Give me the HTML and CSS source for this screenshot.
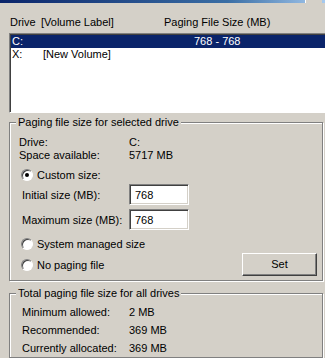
FILE: index.html
```html
<!DOCTYPE html>
<html lang="en">
<head>
  <meta charset="UTF-8" />
  <title>Virtual Memory</title>
  <link rel="stylesheet" href="styles.css">
</head>
<body>
  <div class="titlebar"><span class="tb-btn"></span></div>

  <div class="dialog">
    <div class="list-head">
      <span>Drive</span><span>[Volume Label]</span><span>Paging File Size (MB)</span>
    </div>
    <div class="listbox">
      <div class="row selected"><span>C:</span><span></span><span>768 - 768</span></div>
      <div class="row"><span>X:</span><span>[New Volume]</span><span></span></div>
    </div>

    <fieldset class="group group-drive">
      <legend>Paging file size for selected drive</legend>
      <div class="info"><span>Drive:</span><span>C:</span></div>
      <div class="info"><span>Space available:</span><span>5717 MB</span></div>

      <div class="radio custom"><span class="dot checked"></span>Custom size:</div>
      <div class="field first"><span>Initial size (MB):</span><span class="edit">768</span></div>
      <div class="field"><span>Maximum size (MB):</span><span class="edit">768</span></div>

      <div class="radio system"><span class="dot"></span>System managed size</div>
      <div class="last-row">
        <div class="radio"><span class="dot"></span>No paging file</div>
        <span class="button">Set</span>
      </div>
    </fieldset>

    <fieldset class="group group-total">
      <legend>Total paging file size for all drives</legend>
      <div class="total"><span>Minimum allowed:</span><span>2 MB</span></div>
      <div class="total"><span>Recommended:</span><span>369 MB</span></div>
      <div class="total"><span>Currently allocated:</span><span>369 MB</span></div>
    </fieldset>
  </div>

  <div class="bottom-strip"></div>
</body>
</html>
```

FILE: styles.css
```css
body {
  margin: 0;
  height: 361px;
  overflow: hidden;
  background: #d4d0c8;
  color: #000;
  font-family: "Liberation Sans", Arial, sans-serif;
  font-size: 11px;
}

/* bit of the window caption left at the top */
.titlebar {
  display: flex;
  justify-content: flex-end;
  height: 3px;
  background: linear-gradient(to right, #0a246a, #3a6ea5 70%, #a6caf0);
}
.tb-btn {
  width: 16px;
  margin-right: 3px;
  background: #d4d0c8;
  border-left: 1px solid #fff;
}

.dialog {
  padding-left: 9px;
}

.list-head {
  display: grid;
  grid-template-columns: 31px 123px 1fr;
  padding: 12px 0 4px 1px;
  line-height: 14px;
  white-space: nowrap;
}

.listbox {
  height: 80px;
  margin-right: -4px;
  box-sizing: border-box;
  background: #fff;
  border: 1px solid;
  border-color: #808080 #fff #fff #808080;
  box-shadow: inset 1px 1px #404040;
  padding: 1px 0 0 1px;
}
.row {
  display: grid;
  grid-template-columns: 31px 151px 1fr;
  padding-left: 1px;
  line-height: 13px;
  white-space: nowrap;
}
.row.selected {
  background: #0a246a;
  color: #fff;
}

/* etched group boxes */
.group {
  margin: 0 2px 0 0;
  min-width: 0;
  border: 1px solid #808080;
  box-shadow: inset 1px 1px #fff, 1px 1px #fff;
}
.group legend {
  padding: 0 2px;
  line-height: 13px;
  background: #d4d0c8;
}
.group-drive {
  margin-top: 3px;
  padding: 7px 5px 4px 9px;
}
.group-drive legend {
  margin-left: -3px;
}
.group-total {
  margin-top: 6px;
  padding: 3px 5px 0 12px;
}
.group-total legend {
  margin-left: -6px;
}

.info {
  display: grid;
  grid-template-columns: 110px 1fr;
  line-height: 13px;
}
.total {
  display: grid;
  grid-template-columns: 107px 1fr;
  line-height: 18px;
}

.radio {
  display: flex;
  align-items: center;
  gap: 4px;
  height: 14px;
  padding-left: 2px;
}
.radio.custom { margin-top: 6px; }
.radio.system { margin-top: 7px; }

.dot {
  position: relative;
  width: 12px;
  height: 12px;
  box-sizing: border-box;
  border-radius: 50%;
  background: #fff;
  border: 1px solid;
  border-color: #808080 #fff #fff #808080;
  box-shadow: inset 1px 1px #404040;
}
.dot.checked::after {
  content: "";
  position: absolute;
  left: 3px;
  top: 3px;
  width: 4px;
  height: 4px;
  border-radius: 50%;
  background: #000;
}

.field {
  display: grid;
  grid-template-columns: 107px 60px;
  align-items: center;
  margin-top: 4px;
  padding-left: 3px;
}
.field.first { margin-top: 2px; }

.edit {
  height: 21px;
  box-sizing: border-box;
  padding: 3px 0 0 5px;
  line-height: 14px;
  background: #fff;
  border: 1px solid;
  border-color: #808080 #fff #fff #808080;
  box-shadow: inset 1px 1px #404040, inset -1px -1px #d4d0c8;
}

.last-row {
  display: flex;
  align-items: center;
  justify-content: space-between;
  margin-top: 2px;
}
.button {
  width: 75px;
  height: 23px;
  box-sizing: border-box;
  line-height: 21px;
  text-align: center;
  border: 1px solid;
  border-color: #fff #404040 #404040 #fff;
  box-shadow: inset -1px -1px #808080;
}

.bottom-strip {
  height: 3px;
  background: #fff;
}
```
